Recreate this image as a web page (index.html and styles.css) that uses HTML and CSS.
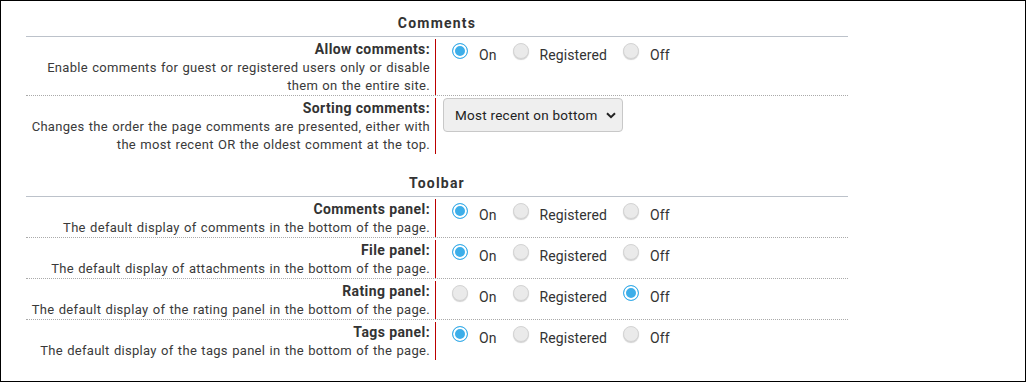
FILE: index.html
```
<!DOCTYPE html>
<html lang="en">

<head>
    <meta charset="UTF-8">
    <meta name="viewport" content="width=device-width, initial-scale=1.0">
    <title>Settings - Comments</title>
    <link rel="stylesheet" href="styles.css">
</head>

<body>
    <div class="frame">
        <div class="settings">
            <h3 class="section-title">Comments</h3>
            <div class="row">
                <div class="label">
                    <strong>Allow comments:</strong>
                    <p>Enable comments for guest or registered users only or disable them on the entire site.</p>
                </div>
                <div class="value">
                    <label class="opt"><input type="radio" name="allow" checked><span>On</span></label>
                    <label class="opt"><input type="radio" name="allow"><span>Registered</span></label>
                    <label class="opt"><input type="radio" name="allow"><span>Off</span></label>
                </div>
            </div>
            <div class="row last">
                <div class="label">
                    <strong>Sorting comments:</strong>
                    <p>Changes the order the page comments are presented, either with the most recent OR the oldest comment at the top.</p>
                </div>
                <div class="value value-select">
                    <div class="select">
                        <span>Most recent on bottom</span>
                        <svg width="10" height="7" viewBox="0 0 10 7"><path d="M1 1.2 L5 5.2 L9 1.2" fill="none" stroke="#222" stroke-width="2"/></svg>
                    </div>
                </div>
            </div>

            <h3 class="section-title">Toolbar</h3>
            <div class="row">
                <div class="label">
                    <strong>Comments panel:</strong>
                    <p>The default display of comments in the bottom of the page.</p>
                </div>
                <div class="value">
                    <label class="opt"><input type="radio" name="cpanel" checked><span>On</span></label>
                    <label class="opt"><input type="radio" name="cpanel"><span>Registered</span></label>
                    <label class="opt"><input type="radio" name="cpanel"><span>Off</span></label>
                </div>
            </div>
            <div class="row">
                <div class="label">
                    <strong>File panel:</strong>
                    <p>The default display of attachments in the bottom of the page.</p>
                </div>
                <div class="value">
                    <label class="opt"><input type="radio" name="fpanel" checked><span>On</span></label>
                    <label class="opt"><input type="radio" name="fpanel"><span>Registered</span></label>
                    <label class="opt"><input type="radio" name="fpanel"><span>Off</span></label>
                </div>
            </div>
            <div class="row">
                <div class="label">
                    <strong>Rating panel:</strong>
                    <p>The default display of the rating panel in the bottom of the page.</p>
                </div>
                <div class="value">
                    <label class="opt"><input type="radio" name="rpanel"><span>On</span></label>
                    <label class="opt"><input type="radio" name="rpanel"><span>Registered</span></label>
                    <label class="opt"><input type="radio" name="rpanel" checked><span>Off</span></label>
                </div>
            </div>
            <div class="row last">
                <div class="label">
                    <strong>Tags panel:</strong>
                    <p>The default display of the tags panel in the bottom of the page.</p>
                </div>
                <div class="value">
                    <label class="opt"><input type="radio" name="tpanel" checked><span>On</span></label>
                    <label class="opt"><input type="radio" name="tpanel"><span>Registered</span></label>
                    <label class="opt"><input type="radio" name="tpanel"><span>Off</span></label>
                </div>
            </div>
        </div>
    </div>
</body>

</html>
```

FILE: styles.css
```
body {
    margin: 0;
    font-family: Roboto, "Noto Sans", sans-serif;
    color: #333;
}

.frame {
    height: 382px;
    box-sizing: border-box;
    border: 1px solid #000;
    padding: 0 25px;
}

.settings {
    width: 822px;
}

.section-title {
    margin: 0;
    padding: 12px 0 3px;
    line-height: 20px;
    font-size: 14px;
    font-weight: bold;
    letter-spacing: 1.2px;
    text-align: center;
    border-bottom: 1px solid #bcc2ca;
}

.row + .section-title {
    margin-top: 7px;
}

.row {
    display: flex;
    padding-top: 2px;
    border-bottom: 1px dotted #aaa;
}

.row.last {
    border-bottom: none;
}

.label {
    width: 404px;
    padding-right: 5px;
    border-right: 1px solid #b00;
    text-align: right;
}

.label strong {
    display: block;
    font-size: 14px;
    line-height: 20px;
    letter-spacing: 0.4px;
}

.label p {
    margin: 0;
    font-size: 13px;
    line-height: 18px;
    color: #3a3a3a;
    letter-spacing: 0.3px;
    word-spacing: 0.75px;
}

.value {
    display: flex;
    align-items: flex-start;
    padding: 4px 0 0 16px;
}

.opt {
    display: flex;
    align-items: flex-start;
    margin-right: 16px;
    font-size: 14px;
    line-height: 20px;
    letter-spacing: 0.1px;
}

.opt span {
    margin: 2px 0 0 11px;
}

.opt input {
    appearance: none;
    -webkit-appearance: none;
    width: 16px;
    height: 16px;
    margin: 0;
    border-radius: 50%;
    background-color: #eaeaea;
    border: 1px solid #d4d4d4;
    box-shadow: 0 1px 1px rgba(0, 0, 0, 0.18);
    box-sizing: border-box;
}

.opt input:checked {
    background-color: #3daee9;
    border-color: #3daee9;
    box-shadow: inset 0 0 0 2px #fff;
}

.value-select {
    padding: 0 0 0 7px;
}

.select {
    width: 180px;
    height: 34px;
    box-sizing: border-box;
    display: flex;
    align-items: center;
    justify-content: space-between;
    padding: 0 6px 0 11px;
    background-color: #efefef;
    border: 1px solid #c8c8c8;
    border-radius: 4px;
    font-size: 13.5px;
    letter-spacing: 0.25px;
    color: #222;
}
```
